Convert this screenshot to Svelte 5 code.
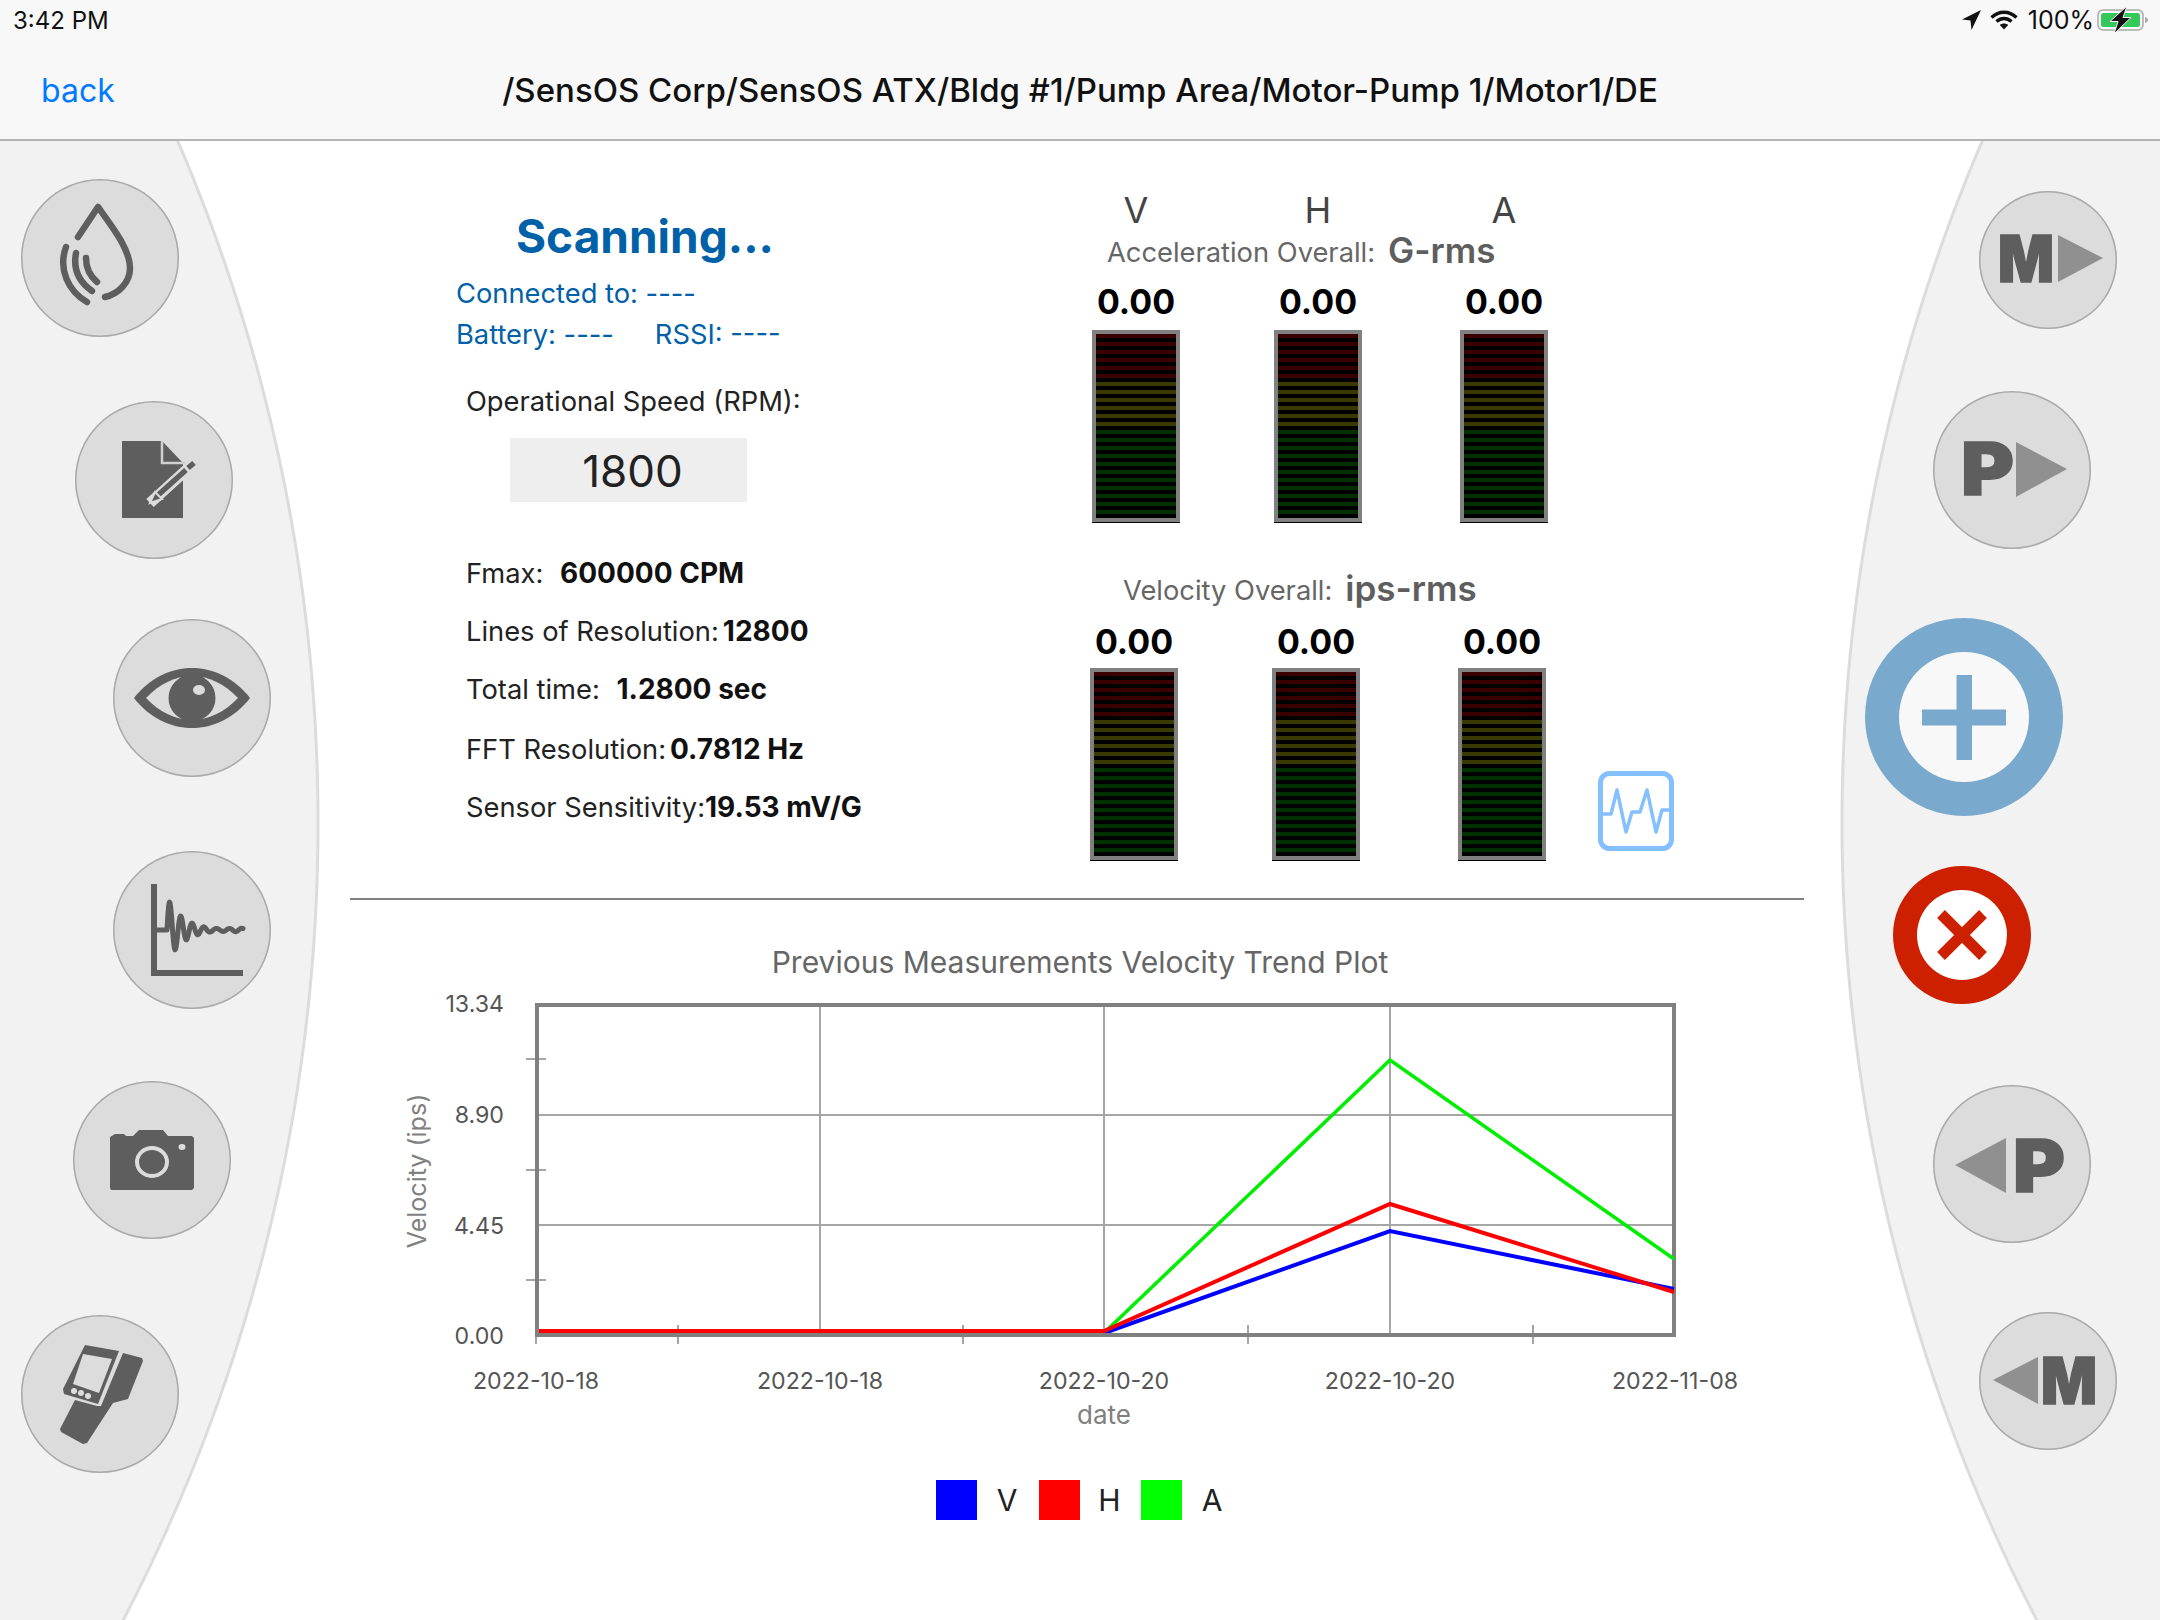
<script>
  const meters = ["V", "H", "A"];

  const xTicks = [536, 678, 963, 1248, 1533];
  const xGrid = [820, 1104, 1390];
  const yGrid = [1114, 1224];
  const yTicks = [1058, 1169, 1279];
  const yLabels = [
    { y: 1003, t: "13.34" },
    { y: 1114, t: "8.90" },
    { y: 1225, t: "4.45" },
    { y: 1335, t: "0.00" }
  ];
  const xLabels = [
    { x: 536, t: "2022-10-18" },
    { x: 820, t: "2022-10-18" },
    { x: 1104, t: "2022-10-20" },
    { x: 1390, t: "2022-10-20" },
    { x: 1675, t: "2022-11-08" }
  ];

  // damped ringing for the spectrum button
  function ringPath() {
    let d = "M44 79 L54 79";
    for (let t = 0; t <= 76; t += 0.5) {
      const y = 79 - 31 * Math.exp(-t / 15) * Math.sin(t / 1.75) - 2 * Math.sin(t / 1.9);
      d += " L" + (54 + t) + " " + y.toFixed(1);
    }
    return d;
  }
</script>

<div class="page">
  <div class="status">
    <span>3:42 PM</span>
    <div class="status-right">
      <svg width="20" height="20" viewBox="0 0 20 20">
        <path d="M20 0 L1 9.500 L9.500 10.500 L10.500 20 Z" fill="#111" />
      </svg>
      <svg width="28" height="20" viewBox="0 0 28 20" fill="none" stroke="#111" stroke-width="3.400">
        <path d="M1.500 7.500 C9 0.500 19 0.500 26.500 7.500" />
        <path d="M6.500 11.500 C11 7.500 17 7.500 21.500 11.500" />
        <path d="M14 19.500 L9.800 15 C12 13 16 13 18.200 15 Z" fill="#111" stroke="none" />
      </svg>
      <span class="pct">100%</span>
      <svg class="batt" width="52" height="22" viewBox="0 0 52 22">
        <rect x="1" y="1" width="45" height="20" rx="5" fill="none" stroke="#a8a8a8" stroke-width="1.500" />
        <rect x="4" y="4" width="39" height="14" rx="2.500" fill="#34c759" />
        <path d="M48 8 C50 8.500 51 10 51 11 C51 12 50 13.500 48 14 Z" fill="#a8a8a8" />
        <path d="M30 -3 L13 12.500 L21 12.500 L17 25 L34 8.500 L26 8.500 Z" fill="#111" stroke="#f8f8f8" stroke-width="1" />
      </svg>
    </div>
  </div>

  <header class="nav">
    <a class="back" href="#back">back</a>
    <h1>/SensOS Corp/SensOS ATX/Bldg #1/Pump Area/Motor-Pump 1/Motor1/DE</h1>
    <span></span>
  </header>

  <div class="body">
    <aside class="rail left">
      <button class="btn b1" aria-label="Lubrication">
        <svg viewBox="0 0 158 158" fill="none" stroke="#5e5e5e" stroke-width="6.500" stroke-linecap="round" stroke-linejoin="round">
          <path d="M57 58 L77 28 C90 46 109 70 109 89 C109 104 97 115 84 118" />
          <path d="M45 68 C37 90 47 112 66 123" />
          <path d="M55 74 C52 90 58 103 71 112" />
          <path d="M65 79 C65 88 69 97 76 103" />
        </svg>
      </button>
      <button class="btn b2" aria-label="Notes">
        <svg viewBox="0 0 158 158">
          <path d="M47 40 H87 L108 62 V117 H47 Z" fill="#5e5e5e" />
          <path d="M87 40 V62 H110" fill="none" stroke="#d0d0d0" stroke-width="2.500" />
          <path d="M75 102 L119 62" stroke="#dcdcdc" stroke-width="11" />
          <path d="M82 95 L111 69" stroke="#5e5e5e" stroke-width="5.500" />
          <path d="M113 67 L119 62" stroke="#5e5e5e" stroke-width="5.500" />
          <path d="M75 102 L80 91 L87 98 Z" fill="#5e5e5e" stroke="#dcdcdc" stroke-width="2" />
        </svg>
      </button>
      <button class="btn b3" aria-label="Inspect">
        <svg viewBox="0 0 158 158">
          <path d="M21 79 C52 39 106 39 137 79 C106 119 52 119 21 79 Z" fill="#5e5e5e" />
          <path d="M33 79 C60 50 98 50 125 79 C98 108 60 108 33 79 Z" fill="#dcdcdc" />
          <circle cx="79" cy="79" r="23.500" fill="#5e5e5e" />
          <ellipse cx="86" cy="71" rx="6" ry="5" fill="#dcdcdc" />
        </svg>
      </button>
      <button class="btn b4" aria-label="Spectrum">
        <svg viewBox="0 0 158 158" fill="none" stroke="#5e5e5e">
          <path d="M41 33 V122 H130" stroke-width="6" />
          <path d={ringPath()} stroke-width="5" stroke-linejoin="round" stroke-linecap="round" />
        </svg>
      </button>
      <button class="btn b5" aria-label="Camera">
        <svg viewBox="0 0 158 158">
          <path d="M37 56 L42 53 H51 L53 55 H60 L66 49 H90 L95 55 H119 L121 57 V107 L119 109 H38 L37 107 Z" fill="#5e5e5e" />
          <ellipse cx="79" cy="81" rx="15" ry="14" fill="none" stroke="#dcdcdc" stroke-width="4" />
          <ellipse cx="109" cy="66" rx="3.500" ry="3" fill="#dcdcdc" />
        </svg>
      </button>
      <button class="btn b6" aria-label="Device">
        <svg viewBox="0 0 158 158">
          <path d="M64 30 L98 36 L77 89 L43 79 L42 74 Z" fill="#5e5e5e" />
          <path d="M62 39 L91 44 L78 78 L52 69 Z" fill="#dcdcdc" />
          <circle cx="53" cy="76" r="3" fill="#dcdcdc" />
          <circle cx="60" cy="78" r="3" fill="#dcdcdc" />
          <circle cx="67" cy="81" r="3" fill="#dcdcdc" />
          <path d="M102 38 L121 43 L122 46 L107 84 L92 88 L66 128 L62 129 L40 117 L39 114 L54 85 L76 91 L80 91 Z" fill="#5e5e5e" />
        </svg>
      </button>
    </aside>

    <main>
      <section class="top">
        <div class="info">
          <h2>Scanning...</h2>
          <p class="link first">Connected to: ----</p>
          <p class="link second"><span>Battery: ----</span><span>RSSI: ----</span></p>
          <p class="row speed">Operational Speed (RPM):</p>
          <div class="rpm">1800</div>
          <p class="row fmax">Fmax: <b class="wide">600000 CPM</b></p>
          <p class="row">Lines of Resolution:<b>12800</b></p>
          <p class="row">Total time: <b class="wide">1.2800 sec</b></p>
          <p class="row fft">FFT Resolution:<b>0.7812 Hz</b></p>
          <p class="row">Sensor Sensitivity:<b class="flush">19.53 mV/G</b></p>
        </div>

        <div class="gauges">
          <div class="group accel">
            <div class="axes">
              {#each meters as m}
                <span>{m}</span>
              {/each}
            </div>
            <div class="overall">Acceleration Overall:<b>G-rms</b></div>
            <div class="meters">
              {#each meters as m}
                <div class="meter">
                  <span class="val">0.00</span>
                  <div class="bar"></div>
                </div>
              {/each}
            </div>
          </div>

          <div class="group vel">
            <div class="overall">Velocity Overall:<b>ips-rms</b></div>
            <div class="meters">
              {#each meters as m}
                <div class="meter">
                  <span class="val">0.00</span>
                  <div class="bar"></div>
                </div>
              {/each}
              <svg class="wave" width="76" height="80" viewBox="0 0 76 80" fill="none" stroke="#84bfff">
                <rect x="2.500" y="2.500" width="71" height="75" rx="9" stroke-width="5" />
                <path d="M4 43 H13 L19 19 L28 61 L34 41 H42 L49 19 L58 61 L64 39 H72" stroke-width="3.500" stroke-linejoin="round" />
              </svg>
            </div>
          </div>
        </div>
      </section>

      <hr />

      <svg class="chart" width="1454" height="560" viewBox="350 899 1454 560" font-family="Inter, sans-serif">
        <text x="1080" y="972" text-anchor="middle" font-size="30" fill="#666">Previous Measurements Velocity Trend Plot</text>

        {#each xGrid as x}
          <line x1={x} x2={x} y1="1003" y2="1333" stroke="#a6a6a6" stroke-width="2" />
        {/each}
        {#each yGrid as y}
          <line x1="536" x2="1674" y1={y} y2={y} stroke="#a6a6a6" stroke-width="2" />
        {/each}
        {#each yTicks as y}
          <line x1="526" x2="546" y1={y} y2={y} stroke="#a6a6a6" stroke-width="2" />
        {/each}
        {#each xTicks as x}
          <line x1={x} x2={x} y1="1324" y2="1343" stroke="#a6a6a6" stroke-width="2" />
        {/each}

        <rect x="537" y="1004" width="1137" height="330" fill="none" stroke="#808080" stroke-width="4" />

        <polyline points="539,1330 1104,1330 1110,1330 1390,1230 1674,1288" fill="none" stroke="#0000ff" stroke-width="4" />
        <polyline points="1106,1330 1390,1059 1674,1258" fill="none" stroke="#00ee00" stroke-width="3.500" />
        <polyline points="539,1330 1104,1330 1390,1203 1674,1291" fill="none" stroke="#ff0000" stroke-width="4" />

        {#each yLabels as l}
          <text x="504" y={l.y + 8} text-anchor="end" font-size="23.200" fill="#555">{l.t}</text>
        {/each}
        {#each xLabels as l}
          <text x={l.x} y="1388" text-anchor="middle" font-size="23.200" fill="#555">{l.t}</text>
        {/each}
        <text x="1104" y="1423" text-anchor="middle" font-size="26" fill="#808080">date</text>
        <text transform="translate(426 1170) rotate(-90)" text-anchor="middle" font-size="25" fill="#808080">Velocity (ips)</text>
      </svg>

      <div class="legend">
        <span class="swatch blue"></span><span class="lab">V</span>
        <span class="swatch red"></span><span class="lab">H</span>
        <span class="swatch green"></span><span class="lab">A</span>
      </div>
    </main>

    <aside class="rail right">
      <button class="btn r1" aria-label="Next machine">
        <svg viewBox="0 0 138 138">
          <text class="glyph" x="19" y="91" textLength="56" lengthAdjust="spacingAndGlyphs" font-size="64">M</text>
          <path d="M79 44 L124 67 L79 91 Z" fill="#909090" />
        </svg>
      </button>
      <button class="btn r2" aria-label="Next point">
        <svg viewBox="0 0 158 158">
          <text class="glyph" x="28" y="104" textLength="53" lengthAdjust="spacingAndGlyphs" font-size="73">P</text>
          <path d="M83 51 L134 78 L83 106 Z" fill="#909090" />
        </svg>
      </button>
      <button class="plus" aria-label="Add">
        <svg viewBox="0 0 198 198">
          <circle cx="99" cy="99" r="65" fill="#f8f8f8" />
          <path d="M91.500 57 H107 V91.500 H141 V107.500 H107 V142 H91.500 V107.500 H57 V91.500 H91.500 Z" fill="#7aa9ce" />
        </svg>
      </button>
      <button class="cancel" aria-label="Cancel">
        <svg viewBox="0 0 138 138">
          <circle cx="69" cy="69" r="45" fill="#fff" />
          <path d="M48 48 L90 90 M90 48 L48 90" stroke="#cc2000" stroke-width="11" />
        </svg>
      </button>
      <button class="btn r3" aria-label="Previous point">
        <svg viewBox="0 0 158 158">
          <path d="M22 80 L73 53 V108 Z" fill="#909090" />
          <text class="glyph" x="80" y="107" textLength="52" lengthAdjust="spacingAndGlyphs" font-size="73">P</text>
        </svg>
      </button>
      <button class="btn r4" aria-label="Previous machine">
        <svg viewBox="0 0 138 138">
          <path d="M14 68 L59 45 V92 Z" fill="#909090" />
          <text class="glyph" x="62" y="92" textLength="56" lengthAdjust="spacingAndGlyphs" font-size="64">M</text>
        </svg>
      </button>
    </aside>
  </div>
</div>

<style>
  :global(body) {
    margin: 0;
    background: #fff;
  }

  .page {
    width: 2160px;
    height: 1620px;
    display: flex;
    flex-direction: column;
    overflow: hidden;
    font-family: Inter, "Noto Sans", sans-serif;
    color: #222;
  }

  .status {
    height: 40px;
    background: #f8f8f8;
    display: flex;
    justify-content: space-between;
    align-items: center;
    padding: 0 11px 0 13px;
    font-size: 24px;
    color: #111;
  }

  .status-right {
    display: flex;
    align-items: center;
    gap: 9px;
  }

  .pct {
    margin: 0 -6px 0 1px;
    font-size: 25px;
  }

  .batt {
    overflow: visible;
  }

  .nav {
    height: 99px;
    background: #f8f8f8;
    border-bottom: 2px solid #b4b4b4;
    display: grid;
    grid-template-columns: 1fr auto 1fr;
    align-items: center;
  }

  .back {
    margin: 2px 0 0 41px;
    color: #007aff;
    font-size: 32px;
    text-decoration: none;
  }

  h1 {
    margin: 0;
    font-size: 33px;
    font-weight: 500;
    color: #111;
    white-space: nowrap;
  }

  .body {
    flex: 1;
    display: flex;
    min-height: 0;
  }

  .rail {
    flex: none;
    display: flex;
    flex-direction: column;
    align-items: flex-start;
  }

  .rail.left {
    width: 350px;
    background: radial-gradient(circle 1730px at -1410px 682px, #f2f2f2 1726px, #dcdcdc 1727px, #dcdcdc 1729px, #fff 1730px);
  }

  .rail.right {
    width: 356px;
    background: radial-gradient(circle 1730px at 1766px 682px, #f2f2f2 1726px, #dcdcdc 1727px, #dcdcdc 1729px, #fff 1730px);
  }

  button {
    padding: 0;
    border: none;
    border-radius: 50%;
    flex: none;
    display: block;
    box-sizing: border-box;
  }

  button svg {
    display: block;
    width: 100%;
    height: 100%;
  }

  .btn {
    width: 158px;
    height: 158px;
    background: #dcdcdc;
    box-shadow: inset 0 0 0 1.500px #aaa;
  }

  .b1 { margin: 38px 0 0 21px; }
  .b2 { margin: 64px 0 0 75px; }
  .b3 { margin: 60px 0 0 113px; }
  .b4 { margin: 74px 0 0 113px; }
  .b5 { margin: 72px 0 0 73px; }
  .b6 { margin: 76px 0 0 21px; }

  .r1 { width: 138px; height: 138px; margin: 50px 0 0 175px; }
  .r2 { margin: 62px 0 0 129px; }
  .r3 { margin: 81px 0 0 129px; }
  .r4 { width: 138px; height: 138px; margin: 69px 0 0 175px; }

  .plus {
    width: 198px;
    height: 198px;
    margin: 69px 0 0 61px;
    background: #7aa9ce;
  }

  .cancel {
    width: 138px;
    height: 138px;
    margin: 50px 0 0 89px;
    background: #cc2000;
  }

  .glyph {
    font-family: Inter, sans-serif;
    font-weight: 900;
    fill: #5e5e5e;
    stroke: #5e5e5e;
    stroke-width: 1.500px;
  }

  main {
    flex: 1;
    min-width: 0;
    display: flex;
    flex-direction: column;
  }

  .top {
    height: 757px;
    flex: none;
    display: grid;
    grid-template-columns: 740px 1fr;
  }

  .info {
    padding: 67px 0 0 106px;
    font-size: 27.300px;
  }

  .info p {
    margin: 0;
    line-height: 36px;
    white-space: nowrap;
  }

  h2 {
    margin: 0 0 0 60px;
    font-size: 46px;
    line-height: 56px;
    font-weight: 700;
    color: #0060a8;
  }

  .info .link {
    color: #0060a8;
  }

  .info .first {
    margin-top: 12px;
  }

  .info .second {
    margin-top: 5px;
    display: flex;
    gap: 41px;
  }

  .info .row {
    margin: 22px 0 0 10px;
    color: #222;
  }

  .info .speed {
    margin-top: 31px;
  }

  .info .fmax {
    margin-top: 54px;
  }

  .info .fft {
    margin-top: 24px;
  }

  .row b {
    margin-left: 4px;
    color: #111;
    font-size: 28px;
    line-height: 1;
    font-weight: 700;
  }

  .row b.wide {
    margin-left: 9px;
  }

  .row b.flush {
    margin-left: 0;
  }

  .rpm {
    box-sizing: border-box;
    width: 237px;
    height: 64px;
    margin: 18px 0 0 54px;
    padding-left: 8px;
    background: #eeeeee;
    font-size: 44px;
    line-height: 66px;
    text-align: center;
    color: #222;
  }

  .gauges {
    padding-top: 49px;
  }

  .accel {
    margin-left: 2px;
  }

  .axes,
  .meters {
    display: flex;
    gap: 94px;
  }

  .axes span {
    width: 88px;
    line-height: 40px;
    font-size: 36px;
    text-align: center;
    color: #444;
  }

  .axes span:nth-child(3),
  .meter:nth-child(3) {
    margin-left: 4px;
  }

  .overall {
    height: 40px;
    line-height: 40px;
    font-size: 27.300px;
    color: #666;
    white-space: nowrap;
  }

  .accel .overall {
    margin: 3px 0 0 15px;
  }

  .vel {
    margin-top: 49px;
  }

  .vel .overall {
    margin-left: 33px;
  }

  .overall b {
    margin-left: 13px;
    font-size: 35px;
    line-height: 1;
    font-weight: 600;
    vertical-align: -1px;
    color: #5e5e5e;
  }

  .meter {
    width: 88px;
    display: flex;
    flex-direction: column;
    align-items: center;
  }

  .accel .meters {
    margin-top: 9px;
  }

  .vel .meters {
    margin-top: 11px;
    align-items: flex-end;
  }

  .val {
    line-height: 40px;
    font-size: 34px;
    font-weight: 700;
    color: #000;
  }

  .bar {
    box-sizing: border-box;
    width: 88px;
    height: 192px;
    margin-top: 8px;
    border: 4px solid #808080;
    box-shadow: 0 1px 0 #000;
    background:
      repeating-linear-gradient(to bottom, transparent 0 4px, #000 4px 8px),
      linear-gradient(to bottom, #3a0000 0 46px, #3a3a00 46px 94px, #003000 94px);
  }

  .vel .bar {
    margin-top: 6px;
  }

  .wave {
    flex: none;
    margin: 0 0 9px -42px;
  }

  hr {
    margin: 0;
    flex: none;
    height: 2px;
    border: none;
    background: #808080;
  }

  .chart {
    display: block;
    flex: none;
  }

  .legend {
    margin-top: 20px;
    padding-left: 586px;
    display: flex;
    align-items: center;
  }

  .swatch {
    width: 41px;
    height: 40px;
    margin-right: 15px;
  }

  .lab {
    width: 30px;
    margin-right: 16.500px;
    text-align: center;
    font-size: 30px;
    color: #222;
  }

  .blue { background: #0000ff; }
  .red { background: #ff0000; }
  .green { background: #00ff00; }
</style>
